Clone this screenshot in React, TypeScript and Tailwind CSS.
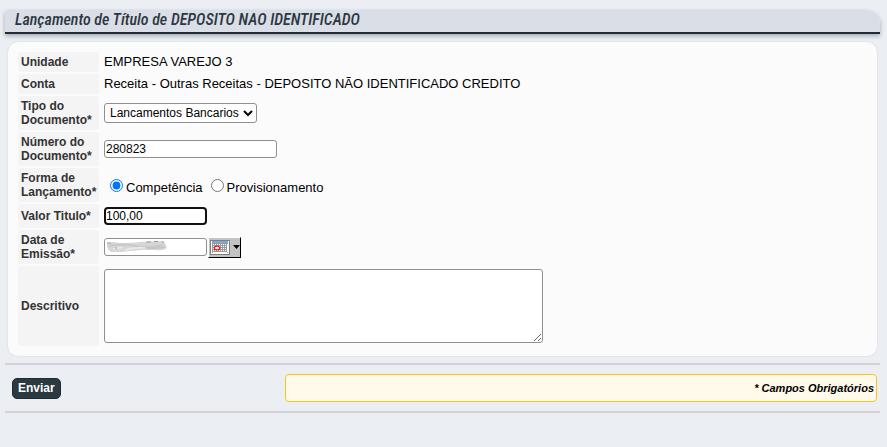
import React from 'react';

const fieldClass =
  'h-[18px] rounded-[3px] border border-[#8f8f8f] bg-white px-px text-[12px] leading-[14px] text-black';

const documentTypes = ['Lancamentos Bancarios', 'Boleto', 'Nota Fiscal'];

type RowProps = {
  label: string;
  htmlFor?: string;
  height: string;
  children: React.ReactNode;
};

const Row: React.FC<RowProps> = ({ label, htmlFor, height, children }) => {
  const labelClass =
    'flex w-[81px] shrink-0 items-center rounded-[3px] bg-[#f4f4f4] px-[3px] text-[12px] leading-[14px] font-bold text-[#333333]';

  return (
    <div className={`flex gap-[5px] ${height}`}>
      {htmlFor ? (
        <label htmlFor={htmlFor} className={labelClass}>
          {label}
        </label>
      ) : (
        <span className={labelClass}>{label}</span>
      )}
      <div className="flex min-w-0 flex-1 items-center">{children}</div>
    </div>
  );
};

const CalendarIcon: React.FC = () => (
  <svg width="20" height="15" viewBox="0 0 20 15">
    <g shapeRendering="crispEdges">
      <rect width="20" height="15" fill="#808080" />
      <rect x="1" y="1" width="18" height="13" fill="#ffffff" />
      <rect x="2" y="1" width="16" height="2" fill="#7aa7dc" />
      <rect x="2" y="3" width="16" height="10" fill="#9a9a9a" />
      {[3, 5, 7, 9, 11, 13, 15].map((x) =>
        [4, 6, 8, 10].map((y) => (
          <rect key={`${x}-${y}`} x={x} y={y} width="1" height="1" fill="#ffffff" />
        ))
      )}
      <path d="M3 12h14M17 4v8" stroke="#ffffff" />
    </g>
    <ellipse cx="7" cy="8" rx="2.7" ry="1.9" fill="#ffffff" stroke="#ff1010" strokeWidth="1.2" />
  </svg>
);

const App: React.FC = () => {
  return (
    <main className="min-h-screen bg-[#ebeef3] pt-[10px] pr-[7px] pl-[5px] font-['Liberation_Sans',Arial,sans-serif] text-black">
      <header className="rounded-tl-[3px] rounded-tr-[14px] shadow-[0_2px_4px_rgba(33,43,54,0.35)]">
        <h1 className="h-[22px] rounded-tl-[3px] rounded-tr-[14px] bg-[#dadee6] px-[10px] font-['Roboto_Condensed','Roboto',sans-serif] text-[16px] leading-[20px] font-medium text-[#2d3742] italic">
          Lançamento de Título de DEPOSITO NAO IDENTIFICADO
        </h1>
        <div className="h-[2px] bg-[#212b36]" />
      </header>

      <form onSubmit={(e) => e.preventDefault()}>
        <section className="mx-[3px] mt-[8px] flex flex-col gap-[2px] rounded-[10px] bg-[#fbfbfb] p-[10px] text-[13px] leading-[14px] shadow-[0_0_2px_rgba(0,0,0,0.12)]">
          <Row label="Unidade" height="min-h-[20px]">
            EMPRESA VAREJO 3
          </Row>
          <Row label="Conta" height="min-h-[20px]">
            Receita - Outras Receitas - DEPOSITO NÃO IDENTIFICADO CREDITO
          </Row>
          <Row label="Tipo do Documento*" htmlFor="tipo" height="min-h-[34px]">
            <select
              id="tipo"
              className="h-[20px] w-[153px] rounded-[3px] border border-[#8f8f8f] bg-white pl-px text-[12px] text-black"
            >
              {documentTypes.map((type) => (
                <option key={type}>{type}</option>
              ))}
            </select>
          </Row>
          <Row label="Número do Documento*" htmlFor="numero" height="min-h-[34px]">
            <input id="numero" type="text" defaultValue="280823" className={`${fieldClass} w-[173px]`} />
          </Row>
          <Row label="Forma de Lançamento*" height="min-h-[34px]">
            <div className="flex gap-[8px] pl-[6px]">
              <label className="flex items-center gap-[3px]">
                <input type="radio" name="forma" defaultChecked className="h-[13px] w-[13px]" />
                <span className="pt-[5px]">Competência</span>
              </label>
              <label className="flex items-center gap-[3px]">
                <input type="radio" name="forma" className="h-[13px] w-[13px]" />
                <span className="pt-[5px]">Provisionamento</span>
              </label>
            </div>
          </Row>
          <Row label="Valor Titulo*" htmlFor="valor" height="min-h-[24px]">
            <input
              id="valor"
              type="text"
              defaultValue="100,00"
              className="h-[18px] w-[103px] rounded-[4px] border-2 border-[#101010] bg-white text-[12px] leading-[14px] text-black outline-none"
            />
          </Row>
          <Row label="Data de Emissão*" htmlFor="data" height="min-h-[34px]">
            <div className="relative flex">
              <input id="data" type="text" className={`${fieldClass} w-[103px]`} />
              {/* data rasurada */}
              <svg className="pointer-events-none absolute top-[2px] left-[2px]" width="62" height="14" viewBox="0 0 62 14">
                <path
                  d="M1 3L7 2L14 3Q28 3 33 2L57 1Q60 4 61 8Q57 11 49 10L36 10Q22 11 16 12L5 12Q0 9 1 3Z"
                  fill="#d6d6d6"
                />
                <path d="M3 6Q16 3 29 6T57 5" fill="none" stroke="#c8c8c8" strokeWidth="2" />
                <path d="M7 9Q14 7 17 8M19 10Q28 7 39 8" fill="none" stroke="#ececec" strokeWidth="1.5" />
                <path d="M41 8Q50 9 59 7" fill="none" stroke="#c4c4c4" strokeWidth="1.5" />
                <path d="M1 3h4M40 2h5M48 1.5h4M56 1.5l2 1M9 8h2" fill="none" stroke="#9a9a9a" />
              </svg>
            </div>
            <button
              type="button"
              aria-label="Calendário"
              className="ml-px flex h-[21px] w-[33px] items-center gap-[3px] border border-t-white border-r-black border-b-black border-l-white bg-[#c3c3c3] pl-px"
            >
              <CalendarIcon />
              <svg width="7" height="4" viewBox="0 0 7 4">
                <path d="M0 0h7L3.5 4z" fill="#000000" />
              </svg>
            </button>
          </Row>
          <Row label="Descritivo" htmlFor="descritivo" height="min-h-[80px]">
            <textarea
              id="descritivo"
              className="h-[74px] w-[439px] max-w-full rounded-[3px] border border-[#8f8f8f] bg-white px-[2px] text-[12px] text-black"
            />
          </Row>
        </section>

        <footer className="mt-[7px] flex items-center border-y-2 border-[#d6d1d5] py-[9px] pr-[3px] pl-[7px]">
          <button
            type="submit"
            className="h-[21px] rounded-[5px] border border-[#212b36] bg-[#2a3942] px-[5px] text-[12px] leading-[14px] font-bold text-white"
          >
            Enviar
          </button>
          <p className="ml-[224px] h-[28px] flex-1 rounded-[4px] border border-[#fcc21b] bg-[#fffaea] px-[2px] text-right text-[11px] leading-[26px] font-bold text-black italic">
            * Campos Obrigatórios
          </p>
        </footer>
      </form>
    </main>
  );
};

export default App;
